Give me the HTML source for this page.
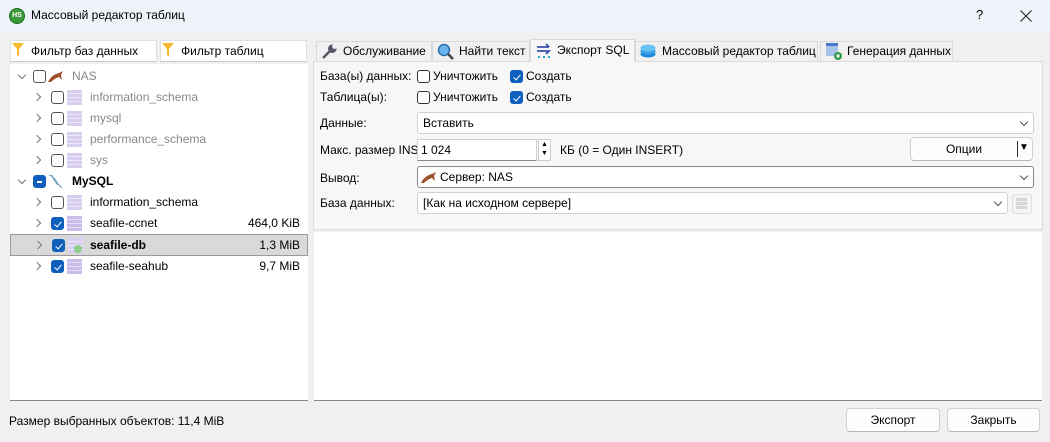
<!DOCTYPE html>
<html><head><meta charset="utf-8"><style>
*{box-sizing:border-box;margin:0;padding:0}
body{width:1050px;height:442px;background:#f0f0f0;font-family:"Segoe UI","Liberation Sans","DejaVu Sans",sans-serif;font-size:12px;color:#000;position:relative;overflow:hidden}
.a{position:absolute;white-space:nowrap}
.title{left:0;top:0;width:1050px;height:32px;background:#eef3f9}
.fbtn{background:#fff;border:1px solid #e0e0e0;border-bottom:1px solid #c8c8c8;height:22px;line-height:20px;padding-left:20px}
.tree{left:10px;top:64px;width:298px;height:337px;background:#fff;border-bottom:1px solid #888}
.row{position:absolute;left:0;width:298px;height:21px;line-height:21px}
.chev{position:absolute;width:6px;height:6px;border-right:1.5px solid #777;border-bottom:1.5px solid #777}
.cb{position:absolute;width:13px;height:13px;border:1px solid #555;border-radius:3px;background:#fff}
.cbc{background:#0f5fbd;border-color:#0f5fbd}
.cbc:after{content:"";position:absolute;left:3.5px;top:1.5px;width:3px;height:6px;border-right:1.5px solid #fff;border-bottom:1.5px solid #fff;transform:rotate(40deg)}
.cbi{background:#0f5fbd;border-color:#0f5fbd}
.tbl{position:absolute;width:15px;height:15px;background:repeating-linear-gradient(#d8cff0 0 3px,#ece8f8 3px 4px)}
.tab{top:41px;height:21px;line-height:19px;background:#f0f0f0;border:1px solid #d9d9d9;border-bottom:none;padding-left:26px}
.panel{left:313px;top:61px;width:730px;height:169px;background:#f7f7f7;border:1px solid #dcdcdc}
.inp{background:#fff;border:1px solid #d0d0d0;border-radius:3px;height:22px;line-height:20px;padding-left:5px}
.dd:after{content:"";position:absolute;right:6px;top:6px;width:5px;height:5px;border-right:1px solid #555;border-bottom:1px solid #555;transform:rotate(45deg)}
.btn{background:#fdfdfd;border:1px solid #d0d0d0;border-bottom-color:#b8b8b8;border-radius:4px;height:24px;line-height:22px;text-align:center}
</style></head><body>
<div class="a title"></div>
<div class="a" style="left:9px;top:8px;width:16px;height:16px;border-radius:50%;background:#3a9a3a;border:1px solid #1d6b1d;color:#fff;font-size:7px;line-height:14px;text-align:center;font-weight:bold">HS</div>
<div class="a" style="left:31px;top:8px;font-size:12px">Массовый редактор таблиц</div>
<div class="a" style="left:976px;top:7px;font-size:13px">?</div>
<svg class="a" style="left:1020px;top:10px" width="12" height="12"><path d="M0.5 0.5L11.5 11.5M11.5 0.5L0.5 11.5" stroke="#222" stroke-width="1.1"/></svg>

<div class="a fbtn" style="left:10px;top:40px;width:147px">Фильтр баз данных</div>
<div class="a fbtn" style="left:160px;top:40px;width:147px">Фильтр таблиц</div>
<svg class="a" style="left:12px;top:43px" width="12" height="14"><path d="M0 0H12L7 6V14L5 12V6Z" fill="#f5b82e"/></svg>
<svg class="a" style="left:162px;top:43px" width="12" height="14"><path d="M0 0H12L7 6V14L5 12V6Z" fill="#f5b82e"/></svg>

<div class="a tree">
 <div class="row" style="top:2px"><div class="chev" style="left:9px;top:6px;transform:rotate(45deg)"></div><div class="cb" style="left:23px;top:4px"></div>
  <svg style="position:absolute;left:38px;top:5px" width="16" height="11"><path d="M0 11C3 5 7 3 11 2L15 0L13 4L14 9L11 6C8 7 5 9 3 11Z" fill="#a0522d"/></svg>
  <span style="position:absolute;left:62px;color:#888">NAS</span></div>
 <div class="row" style="top:23px"><div class="chev" style="left:24px;top:7px;transform:rotate(-45deg)"></div><div class="cb" style="left:41px;top:4px"></div><div class="tbl" style="left:57px;top:3px"></div><span style="position:absolute;left:80px;color:#888">information_schema</span></div>
 <div class="row" style="top:44px"><div class="chev" style="left:24px;top:7px;transform:rotate(-45deg)"></div><div class="cb" style="left:41px;top:4px"></div><div class="tbl" style="left:57px;top:3px"></div><span style="position:absolute;left:80px;color:#888">mysql</span></div>
 <div class="row" style="top:65px"><div class="chev" style="left:24px;top:7px;transform:rotate(-45deg)"></div><div class="cb" style="left:41px;top:4px"></div><div class="tbl" style="left:57px;top:3px"></div><span style="position:absolute;left:80px;color:#888">performance_schema</span></div>
 <div class="row" style="top:86px"><div class="chev" style="left:24px;top:7px;transform:rotate(-45deg)"></div><div class="cb" style="left:41px;top:4px"></div><div class="tbl" style="left:57px;top:3px"></div><span style="position:absolute;left:80px;color:#888">sys</span></div>
 <div class="row" style="top:107px"><div class="chev" style="left:9px;top:6px;transform:rotate(45deg)"></div><div class="cb cbi" style="left:23px;top:4px"><div style="position:absolute;left:3px;top:5px;width:5px;height:1.5px;background:#fff"></div></div>
  <svg style="position:absolute;left:38px;top:3px" width="16" height="15"><path d="M1 1C5 2 8 6 10 10L14 14M4 1C5 5 7 8 10 11" stroke="#6a9ab8" fill="none"/></svg>
  <span style="position:absolute;left:62px;font-weight:bold">MySQL</span></div>
 <div class="row" style="top:128px"><div class="chev" style="left:24px;top:7px;transform:rotate(-45deg)"></div><div class="cb" style="left:41px;top:4px"></div><div class="tbl" style="left:57px;top:3px"></div><span style="position:absolute;left:80px">information_schema</span></div>
 <div class="row" style="top:149px"><div class="chev" style="left:24px;top:7px;transform:rotate(-45deg)"></div><div class="cb cbc" style="left:41px;top:4px"></div><div class="tbl" style="left:57px;top:3px;background:repeating-linear-gradient(#cabde9 0 3px,#e4ddf5 3px 4px)"></div><span style="position:absolute;left:80px">seafile-ccnet</span><span style="position:absolute;right:8px">464,0 KiB</span></div>
 <div class="row" style="top:170px;background:#d9d9d9;border:1px solid #9a9a9a;height:22px"><div class="chev" style="left:24px;top:7px;transform:rotate(-45deg)"></div><div class="cb cbc" style="left:41px;top:4px"></div><div class="tbl" style="left:57px;top:3px"></div><div style="position:absolute;left:63px;top:10px;width:8px;height:8px;border-radius:50%;background:#8cd08c"></div><span style="position:absolute;left:79px;font-weight:bold;line-height:20px">seafile-db</span><span style="position:absolute;right:7px;line-height:20px">1,3 MiB</span></div>
 <div class="row" style="top:192px"><div class="chev" style="left:24px;top:7px;transform:rotate(-45deg)"></div><div class="cb cbc" style="left:41px;top:4px"></div><div class="tbl" style="left:57px;top:3px;background:repeating-linear-gradient(#cabde9 0 3px,#e4ddf5 3px 4px)"></div><span style="position:absolute;left:80px">seafile-seahub</span><span style="position:absolute;right:8px">9,7 MiB</span></div>
</div>

<div class="a tab" style="left:316px;width:116px">Обслуживание</div>
<svg class="a" style="left:321px;top:44px" width="16" height="16"><path d="M2 14L9 7M10 2a3 3 0 1 0 4 4l-2 0-2-2z" stroke="#556" stroke-width="2.5" fill="none"/></svg>
<div class="a tab" style="left:432px;width:98px">Найти текст</div>
<svg class="a" style="left:437px;top:43px" width="17" height="17"><circle cx="7" cy="7" r="5.5" fill="#6ab4ec" stroke="#2e6ea8" stroke-width="1.5"/><path d="M11 11L16 16" stroke="#444" stroke-width="2.5"/></svg>
<div class="a tab" style="left:530px;width:105px;top:39px;height:23px;background:#f7f7f7;line-height:21px;z-index:2">Экспорт SQL</div>
<svg class="a" style="left:536px;top:43px;z-index:3" width="16" height="16"><path d="M1 4H13M10 1L13 4M1 8H13L10 11" stroke="#3a4fb0" stroke-width="1.8" fill="none"/><path d="M2 14h2M7 14h2M12 14h2" stroke="#2aa8c8" stroke-width="2"/></svg>
<div class="a tab" style="left:635px;width:183px">Массовый редактор таблиц</div>
<svg class="a" style="left:640px;top:44px" width="16" height="14"><ellipse cx="8" cy="10" rx="7.5" ry="3.5" fill="#1c86d8"/><ellipse cx="8" cy="7" rx="7.5" ry="3.5" fill="#3aa0ea"/><ellipse cx="8" cy="4" rx="7.5" ry="3.5" fill="#6cc2f6"/></svg>
<div class="a tab" style="left:820px;width:133px">Генерация данных</div>
<svg class="a" style="left:826px;top:43px" width="16" height="17"><rect x="0" y="0" width="12" height="13" fill="#a8c4e8"/><rect x="0" y="0" width="12" height="3" fill="#4a78c8"/><circle cx="12" cy="13" r="4" fill="#2e9a48"/><path d="M12 11v4M10 13h4" stroke="#fff" stroke-width="1.3"/></svg>

<div class="a panel"></div>
<div class="a" style="left:320px;top:69px">База(ы) данных:</div>
<div class="a cb" style="left:417px;top:70px;border-color:#333"></div><div class="a" style="left:433px;top:69px">Уничтожить</div>
<div class="a cb cbc" style="left:510px;top:70px"></div><div class="a" style="left:526px;top:69px">Создать</div>
<div class="a" style="left:320px;top:90px">Таблица(ы):</div>
<div class="a cb" style="left:417px;top:91px;border-color:#333"></div><div class="a" style="left:433px;top:90px">Уничтожить</div>
<div class="a cb cbc" style="left:510px;top:91px"></div><div class="a" style="left:526px;top:90px">Создать</div>

<div class="a" style="left:320px;top:116px">Данные:</div>
<div class="a inp dd" style="left:417px;top:112px;width:617px">Вставить</div>
<div class="a" style="left:320px;top:143px">Макс. размер INS</div>
<div class="a inp" style="left:417px;top:139px;width:120px;border-radius:0;border-bottom-color:#888;padding-left:3px">1 024</div>
<div class="a" style="left:538px;top:139px;width:13px;height:22px;background:#fff;border:1px solid #ccc;font-size:7px;line-height:9px;text-align:center">▲<br>▼</div>
<div class="a" style="left:560px;top:143px">КБ (0 = Один INSERT)</div>
<div class="a btn" style="left:910px;top:137px;width:123px;padding-right:15px">Опции</div>
<div class="a" style="left:1017px;top:141px;width:1px;height:16px;background:#333"></div>
<div class="a" style="left:1019px;top:142px;font-size:10px">▼</div>
<div class="a" style="left:320px;top:171px">Вывод:</div>
<div class="a inp dd" style="left:417px;top:166px;width:617px;border-color:#888;padding-left:22px">Сервер: NAS</div>
<svg class="a" style="left:421px;top:172px" width="16" height="11"><path d="M0 11C3 5 7 3 11 2L15 0L13 4L14 9L11 6C8 7 5 9 3 11Z" fill="#a0522d"/></svg>
<div class="a" style="left:320px;top:196px">База данных:</div>
<div class="a inp dd" style="left:417px;top:192px;width:591px">[Как на исходном сервере]</div>
<div class="a" style="left:1012px;top:194px;width:20px;height:20px;border:1px solid #e0e0e0;border-radius:3px;background:#f4f4f4"><div style="position:absolute;left:3px;top:3px;width:11px;height:11px;background:repeating-linear-gradient(#d6d6d6 0 3px,#eee 3px 4px)"></div></div>

<div class="a" style="left:314px;top:232px;width:728px;height:169px;background:#fff;border-bottom:1px solid #888"></div>

<div class="a" style="left:9px;top:414px">Размер выбранных объектов: 11,4 MiB</div>
<div class="a btn" style="left:846px;top:408px;width:94px">Экспорт</div>
<div class="a btn" style="left:947px;top:408px;width:93px">Закрыть</div>
</body></html>
